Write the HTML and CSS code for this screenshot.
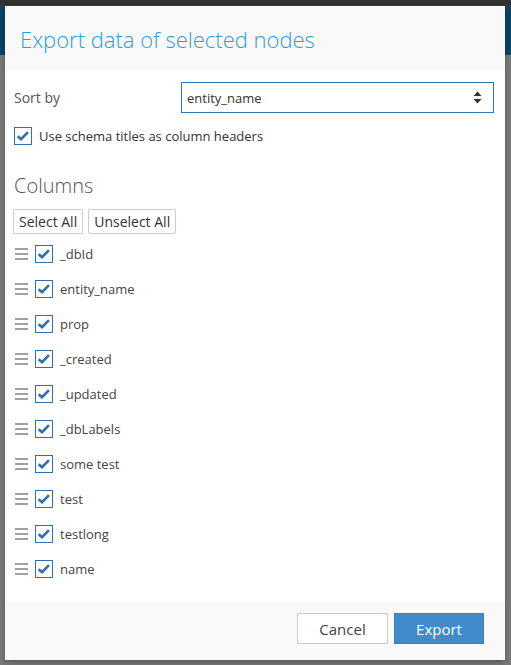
FILE: index.html
```html
<!DOCTYPE html>
<html>
<head>
<meta charset="utf-8">
<link rel="stylesheet" href="styles.css">
</head>
<body>
<div class="backdrop">
  <div class="topbar"></div>
  <div class="band"></div>
  <div class="rest"></div>
</div>
<div class="modal">
  <div class="modal-header">
    <h1 class="title">Export data of selected nodes</h1>
  </div>
  <div class="modal-body">
    <div class="sort-row">
      <span class="sort-label">Sort by</span>
      <div class="select">
        <span>entity_name</span>
        <svg class="arrows" width="9" height="13" viewBox="0 0 9 13"><path d="M4.5 0.5 L8.5 5 L0.5 5 Z M4.5 12.5 L8.5 8 L0.5 8 Z" fill="#333"/></svg>
      </div>
    </div>
    <label class="check-row">
      <span class="cb"><svg viewBox="0 0 18 18" width="16" height="16"><path d="M3 9.2 L6.8 12.6 L14.6 4.6" fill="none" stroke="#2f6fb0" stroke-width="3"/></svg></span>
      <span class="cb-text">Use schema titles as column headers</span>
    </label>
    <h2 class="columns-title">Columns</h2>
    <div class="btn-row">
      <button class="btn">Select All</button>
      <button class="btn">Unselect All</button>
    </div>
    <ul class="col-list">
      <li class="col-item"><span class="grip"><i></i><i></i><i></i></span><span class="cb"><svg viewBox="0 0 18 18" width="16" height="16"><path d="M3 9.2 L6.8 12.6 L14.6 4.6" fill="none" stroke="#2f6fb0" stroke-width="3"/></svg></span><span class="col-name">_dbId</span></li>
      <li class="col-item"><span class="grip"><i></i><i></i><i></i></span><span class="cb"><svg viewBox="0 0 18 18" width="16" height="16"><path d="M3 9.2 L6.8 12.6 L14.6 4.6" fill="none" stroke="#2f6fb0" stroke-width="3"/></svg></span><span class="col-name">entity_name</span></li>
      <li class="col-item"><span class="grip"><i></i><i></i><i></i></span><span class="cb"><svg viewBox="0 0 18 18" width="16" height="16"><path d="M3 9.2 L6.8 12.6 L14.6 4.6" fill="none" stroke="#2f6fb0" stroke-width="3"/></svg></span><span class="col-name">prop</span></li>
      <li class="col-item"><span class="grip"><i></i><i></i><i></i></span><span class="cb"><svg viewBox="0 0 18 18" width="16" height="16"><path d="M3 9.2 L6.8 12.6 L14.6 4.6" fill="none" stroke="#2f6fb0" stroke-width="3"/></svg></span><span class="col-name">_created</span></li>
      <li class="col-item"><span class="grip"><i></i><i></i><i></i></span><span class="cb"><svg viewBox="0 0 18 18" width="16" height="16"><path d="M3 9.2 L6.8 12.6 L14.6 4.6" fill="none" stroke="#2f6fb0" stroke-width="3"/></svg></span><span class="col-name">_updated</span></li>
      <li class="col-item"><span class="grip"><i></i><i></i><i></i></span><span class="cb"><svg viewBox="0 0 18 18" width="16" height="16"><path d="M3 9.2 L6.8 12.6 L14.6 4.6" fill="none" stroke="#2f6fb0" stroke-width="3"/></svg></span><span class="col-name">_dbLabels</span></li>
      <li class="col-item"><span class="grip"><i></i><i></i><i></i></span><span class="cb"><svg viewBox="0 0 18 18" width="16" height="16"><path d="M3 9.2 L6.8 12.6 L14.6 4.6" fill="none" stroke="#2f6fb0" stroke-width="3"/></svg></span><span class="col-name">some test</span></li>
      <li class="col-item"><span class="grip"><i></i><i></i><i></i></span><span class="cb"><svg viewBox="0 0 18 18" width="16" height="16"><path d="M3 9.2 L6.8 12.6 L14.6 4.6" fill="none" stroke="#2f6fb0" stroke-width="3"/></svg></span><span class="col-name">test</span></li>
      <li class="col-item"><span class="grip"><i></i><i></i><i></i></span><span class="cb"><svg viewBox="0 0 18 18" width="16" height="16"><path d="M3 9.2 L6.8 12.6 L14.6 4.6" fill="none" stroke="#2f6fb0" stroke-width="3"/></svg></span><span class="col-name">testlong</span></li>
      <li class="col-item"><span class="grip"><i></i><i></i><i></i></span><span class="cb"><svg viewBox="0 0 18 18" width="16" height="16"><path d="M3 9.2 L6.8 12.6 L14.6 4.6" fill="none" stroke="#2f6fb0" stroke-width="3"/></svg></span><span class="col-name">name</span></li>
    </ul>
  </div>
  <div class="modal-footer">
    <button class="fbtn cancel">Cancel</button>
    <button class="fbtn export">Export</button>
  </div>
</div>
</body>
</html>
```
FILE: styles.css
```css
html, body {
  margin: 0;
  padding: 0;
  width: 511px;
  height: 665px;
  overflow: hidden;
  font-family: "Open Sans", "Noto Sans", sans-serif;
}
.backdrop {
  width: 511px;
  height: 665px;
  display: flex;
  flex-direction: column;
}
.topbar { height: 5px; background: #2f3135; }
.band { height: 50px; background: #0b4466; }
.rest { flex: 1; background: #7a7a7a; }

.modal {
  position: absolute;
  left: 5px;
  top: 6px;
  width: 500px;
  height: 654px;
  background: #fff;
  display: flex;
  flex-direction: column;
  box-shadow: 0 2px 6px rgba(0,0,0,0.3);
}
.modal-header {
  height: 64px;
  background: #f9f9f9;
  display: flex;
  align-items: center;
  padding-left: 15px;
  box-sizing: border-box;
}
.title {
  margin: 0;
  font-size: 22px;
  font-weight: 300;
  color: #2e9be0;
  line-height: 1;
  padding-top: 1px;
}
.modal-body {
  flex: 1;
  padding: 12px 11px 0 9px;
}
.sort-row {
  display: flex;
  align-items: center;
  height: 31px;
}
.sort-label {
  width: 167px;
  font-size: 14px;
  color: #555;
}
.select {
  flex: 1;
  height: 31px;
  box-sizing: border-box;
  border: 1px solid #2f76b5;
  display: flex;
  align-items: center;
  justify-content: space-between;
  padding: 0 11px 0 5px;
  font-size: 13px;
  color: #333;
}
.arrows { display: block; }
.check-row {
  display: flex;
  align-items: center;
  margin-top: 13px;
  height: 19px;
}
.cb {
  width: 18px;
  height: 18px;
  box-sizing: border-box;
  border: 1px solid #2f6fb0;
  display: flex;
  align-items: center;
  justify-content: center;
  background: #fff;
  flex: none;
}
.cb svg { display: block; }
.cb-text {
  margin-left: 7px;
  font-size: 13px;
  color: #333;
}
.columns-title {
  margin: 29px 0 0 0;
  font-size: 20px;
  font-weight: 300;
  color: #555;
  line-height: 24px;
  height: 24px;
}
.btn-row {
  display: flex;
  gap: 5px;
  margin-top: 11px;
  margin-left: -1px;
}
.btn {
  height: 25px;
  padding: 0 5px;
  border: 1px solid #ccc;
  background: #fff;
  border-radius: 1px;
  font-family: "Open Sans", "Noto Sans", sans-serif;
  font-size: 14px;
  color: #333;
  line-height: 23px;
}
.col-list {
  list-style: none;
  margin: 11px 0 0 0;
  padding: 0;
}
.col-item {
  display: flex;
  align-items: center;
  height: 18px;
  margin-bottom: 17px;
}
.grip {
  width: 13px;
  display: flex;
  flex-direction: column;
  gap: 3px;
  margin-left: 1px;
  margin-right: 7px;
}
.grip i {
  display: block;
  height: 2px;
  background: #a0a0a0;
}
.col-name {
  margin-left: 7px;
  font-size: 13px;
  color: #444;
}
.modal-footer {
  height: 58px;
  background: #f9f9f9;
  display: flex;
  align-items: flex-start;
  justify-content: flex-end;
  gap: 6px;
  padding: 11px 21px 0 0;
  box-sizing: border-box;
}
.fbtn {
  height: 31px;
  width: 91px;
  font-family: "Open Sans", "Noto Sans", sans-serif;
  font-size: 15px;
  border-radius: 0;
}
.cancel {
  background: #fff;
  border: 1px solid #ccc;
  color: #444;
}
.export {
  width: 90px;
  background: #428bca;
  border: 1px solid #3a80bd;
  color: #fff;
}
```
